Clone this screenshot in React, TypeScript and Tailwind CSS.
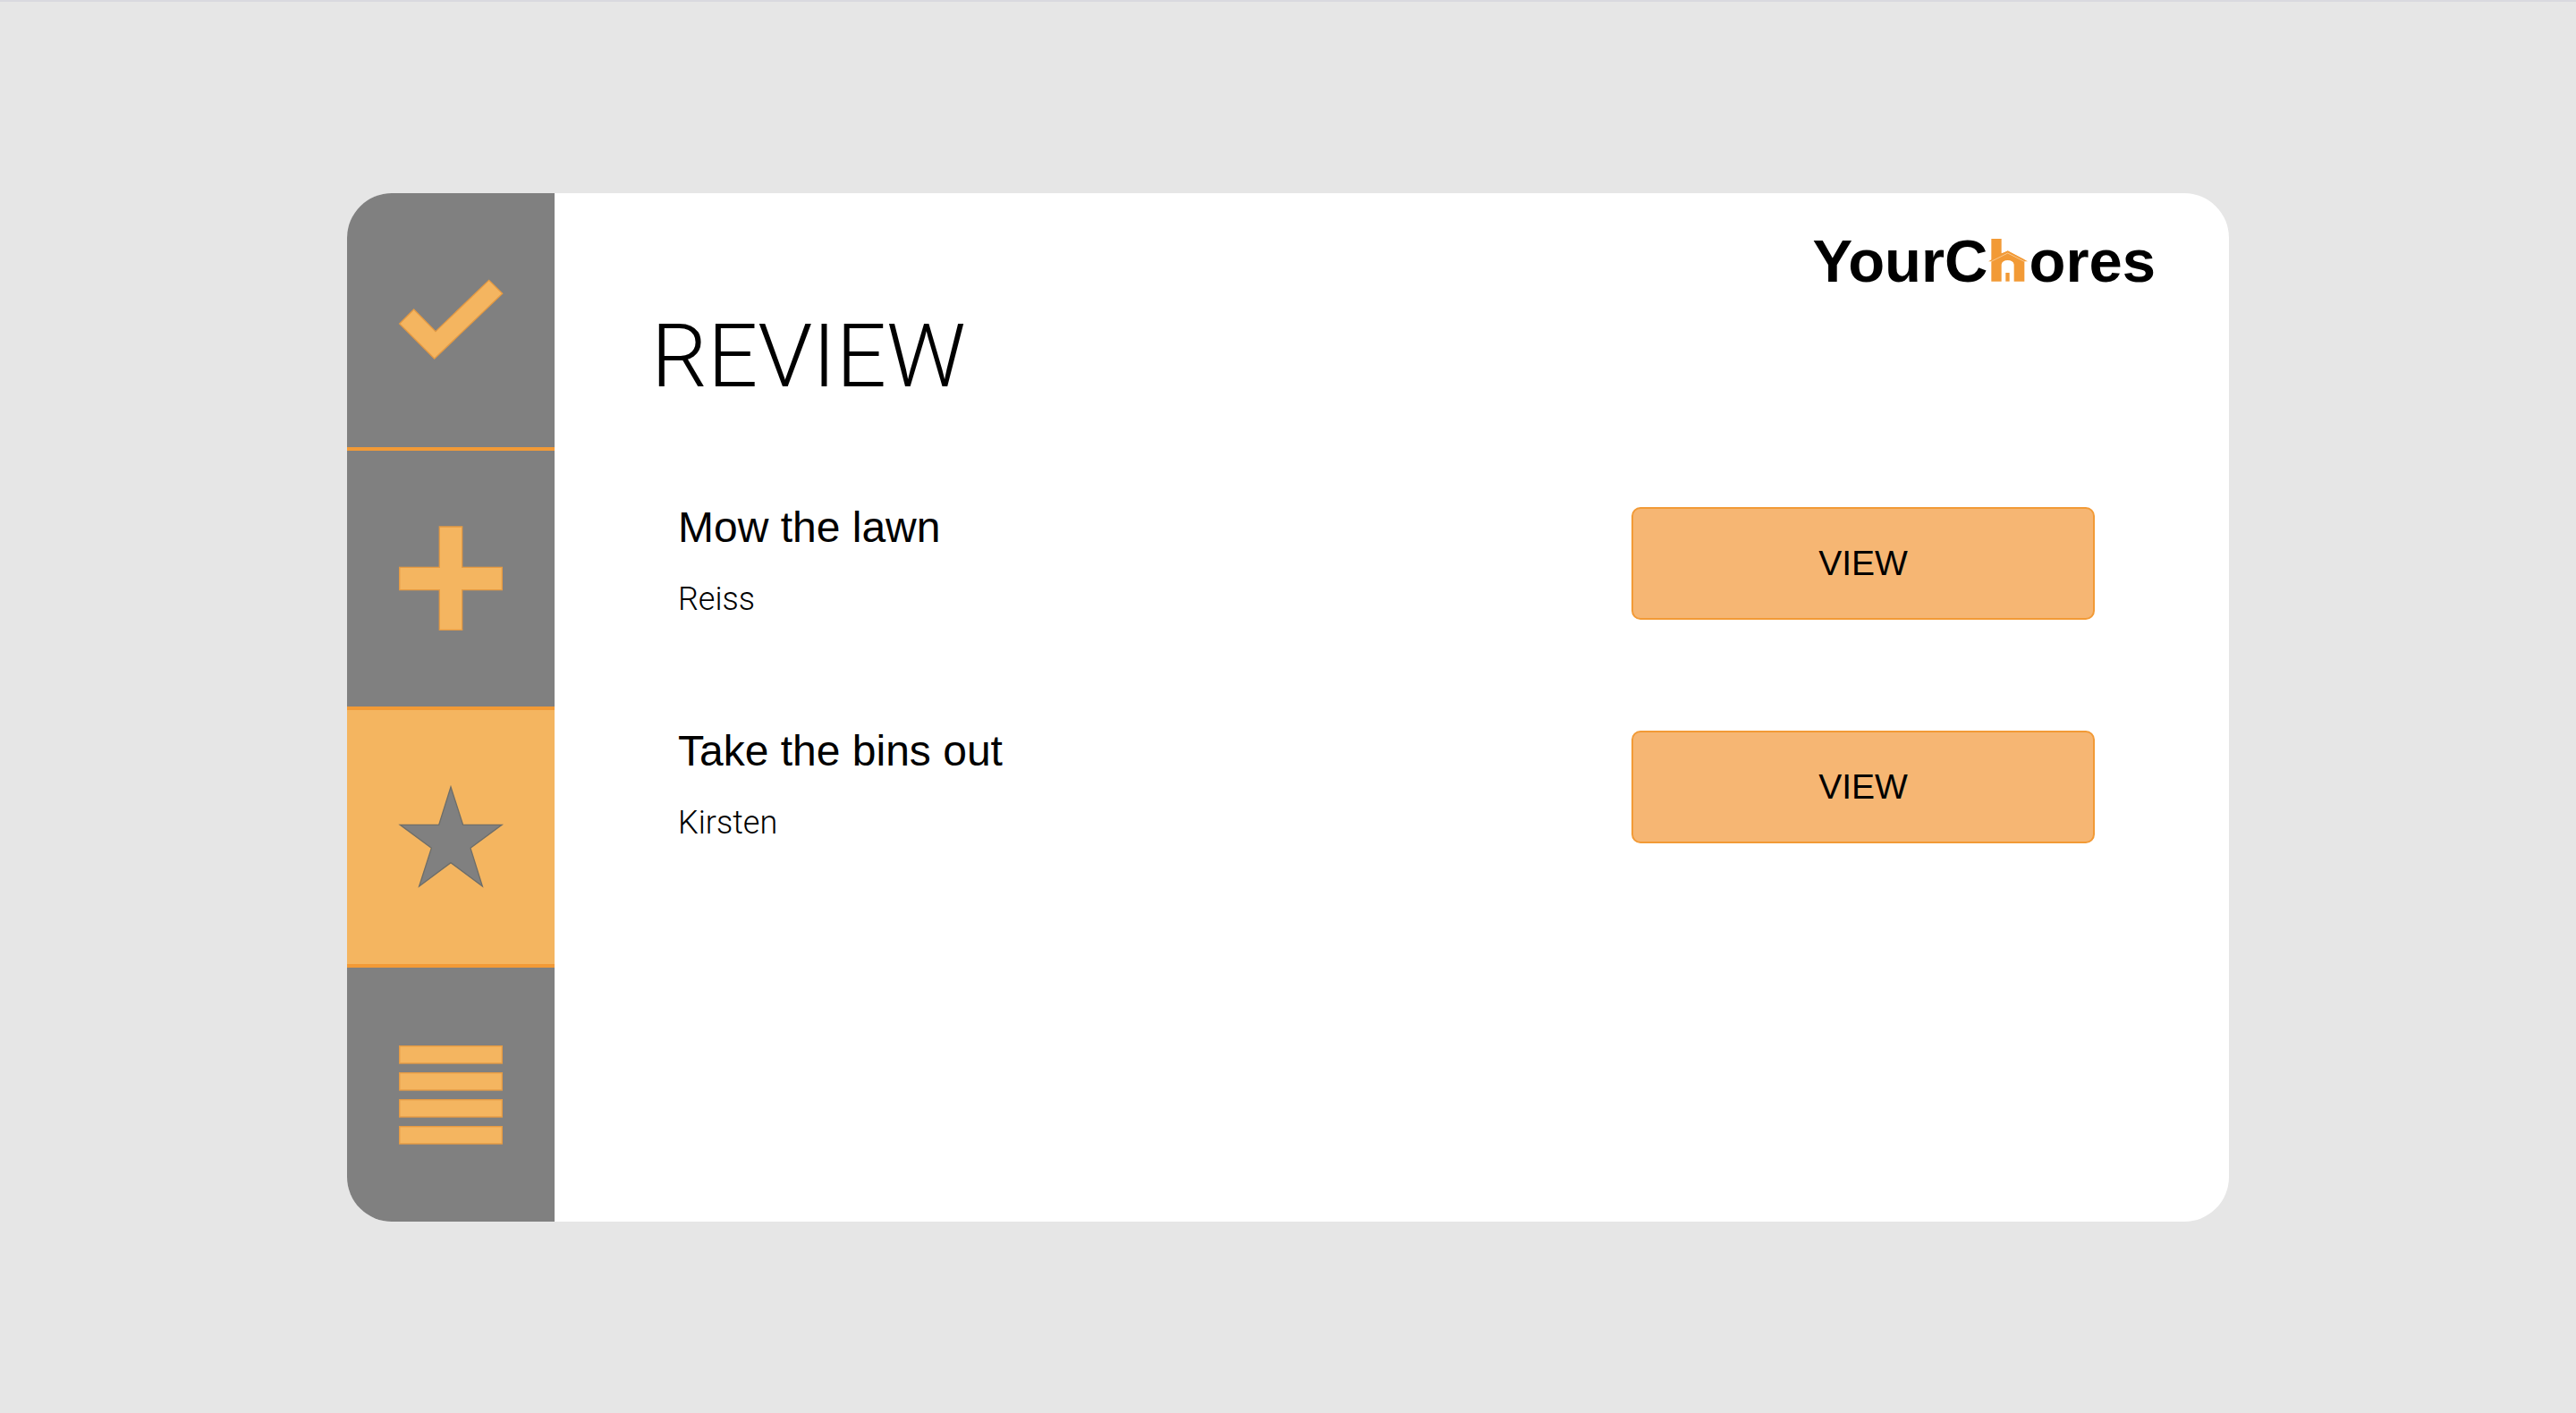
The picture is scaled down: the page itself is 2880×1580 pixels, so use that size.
import type { ReactNode } from 'react';

const chores = [
  { id: 'lawn', title: 'Mow the lawn', person: 'Reiss' },
  { id: 'bins', title: 'Take the bins out', person: 'Kirsten' },
];

function Icon({ active = false, children }: { active?: boolean; children: ReactNode }) {
  return (
    <svg
      viewBox="0 0 348 348"
      className={
        active
          ? 'size-[116px] overflow-visible fill-[#808080] stroke-[#6e6e69]'
          : 'size-[116px] overflow-visible fill-[#f4b560] stroke-[#e59a42]'
      }
      strokeWidth="4"
      aria-hidden="true"
    >
      {children}
    </svg>
  );
}

function Logo() {
  return (
    <div className="flex items-baseline text-[67px] leading-[76px] font-bold" aria-label="YourChores">
      <span>YourC</span>
      <svg viewBox="0 0 132 150" className="mx-px h-[50px] w-[44px] fill-[#f29a36]" aria-hidden="true">
        <path d="M10 6H44V55L65 47L121 76V149H86V92Q83 78 65 78Q47 78 44 92V149H10Z" />
        <path d="M65 46L132 82H119L65 55L13 82H0Z" />
        <path d="M8 83L65 54L122 83" fill="none" stroke="#fbdcb8" strokeWidth="2" />
        <rect x="58" y="120" width="13" height="29" />
      </svg>
      <span>ores</span>
    </div>
  );
}

const navButton = 'flex w-full items-center justify-center';

export default function App() {
  return (
    <div className="min-h-screen border-t-2 border-[#d9d9df] bg-[#e6e6e6] px-[388px] py-[214px] font-['Liberation_Sans',Arial,sans-serif] text-black">
      <div className="flex min-h-[1150px] overflow-hidden rounded-[50px] bg-white">
        <nav className="flex w-[232px] shrink-0 flex-col bg-[#808080]" aria-label="Main">
          <button type="button" aria-label="Done" className={`${navButton} h-[288px] border-b-4 border-[#f29a36]`}>
            <Icon>
              <path d="M50 138L123 212L302 40L347 85L119 303L2 186Z" />
            </Icon>
          </button>
          <button type="button" aria-label="Add" className={`${navButton} h-[290px] border-b-4 border-[#f29a36]`}>
            <Icon>
              <path d="M136 0H212V136H346V212H212V346H136V212H2V136H136Z" />
            </Icon>
          </button>
          <button
            type="button"
            aria-label="Review"
            aria-current="page"
            className={`${navButton} h-[288px] border-b-4 border-[#f29a36] bg-[#f4b560]`}
          >
            <Icon active>
              <path d="M174 6L215 133H345L240 211L280 339L174 260L68 339L109 211L4 133H134Z" />
            </Icon>
          </button>
          <button type="button" aria-label="List" className={`${navButton} grow`}>
            <Icon>
              <rect x="2" y="11" width="344" height="58" />
              <rect x="2" y="101" width="344" height="58" />
              <rect x="2" y="191" width="344" height="58" />
              <rect x="2" y="281" width="344" height="58" />
            </Icon>
          </button>
        </nav>
        <main className="flex grow flex-col">
          <header className="flex justify-end pt-[38px] pr-[82px]">
            <Logo />
          </header>
          <h1 className="mt-[8px] px-[108px] font-[Roboto,sans-serif] text-[99px] leading-[120px] font-light">REVIEW</h1>
          <ul className="mt-[104px] flex flex-col gap-[114px] pr-[150px] pl-[138px]">
            {chores.map((chore) => (
              <li key={chore.id} className="flex items-center justify-between">
                <div className="flex flex-col gap-[32px] pb-[8px]">
                  <h2 className="text-[48px] leading-[56px]">{chore.title}</h2>
                  <p className="font-[Roboto,sans-serif] text-[36px] leading-[40px] font-light">{chore.person}</p>
                </div>
                <button
                  type="button"
                  aria-label={`VIEW ${chore.title}`}
                  className="h-[126px] w-[518px] rounded-[10px] border-2 border-[#f29a36] bg-[#f6b673] text-[39px] leading-[44px]"
                >
                  VIEW
                </button>
              </li>
            ))}
          </ul>
        </main>
      </div>
    </div>
  );
}
